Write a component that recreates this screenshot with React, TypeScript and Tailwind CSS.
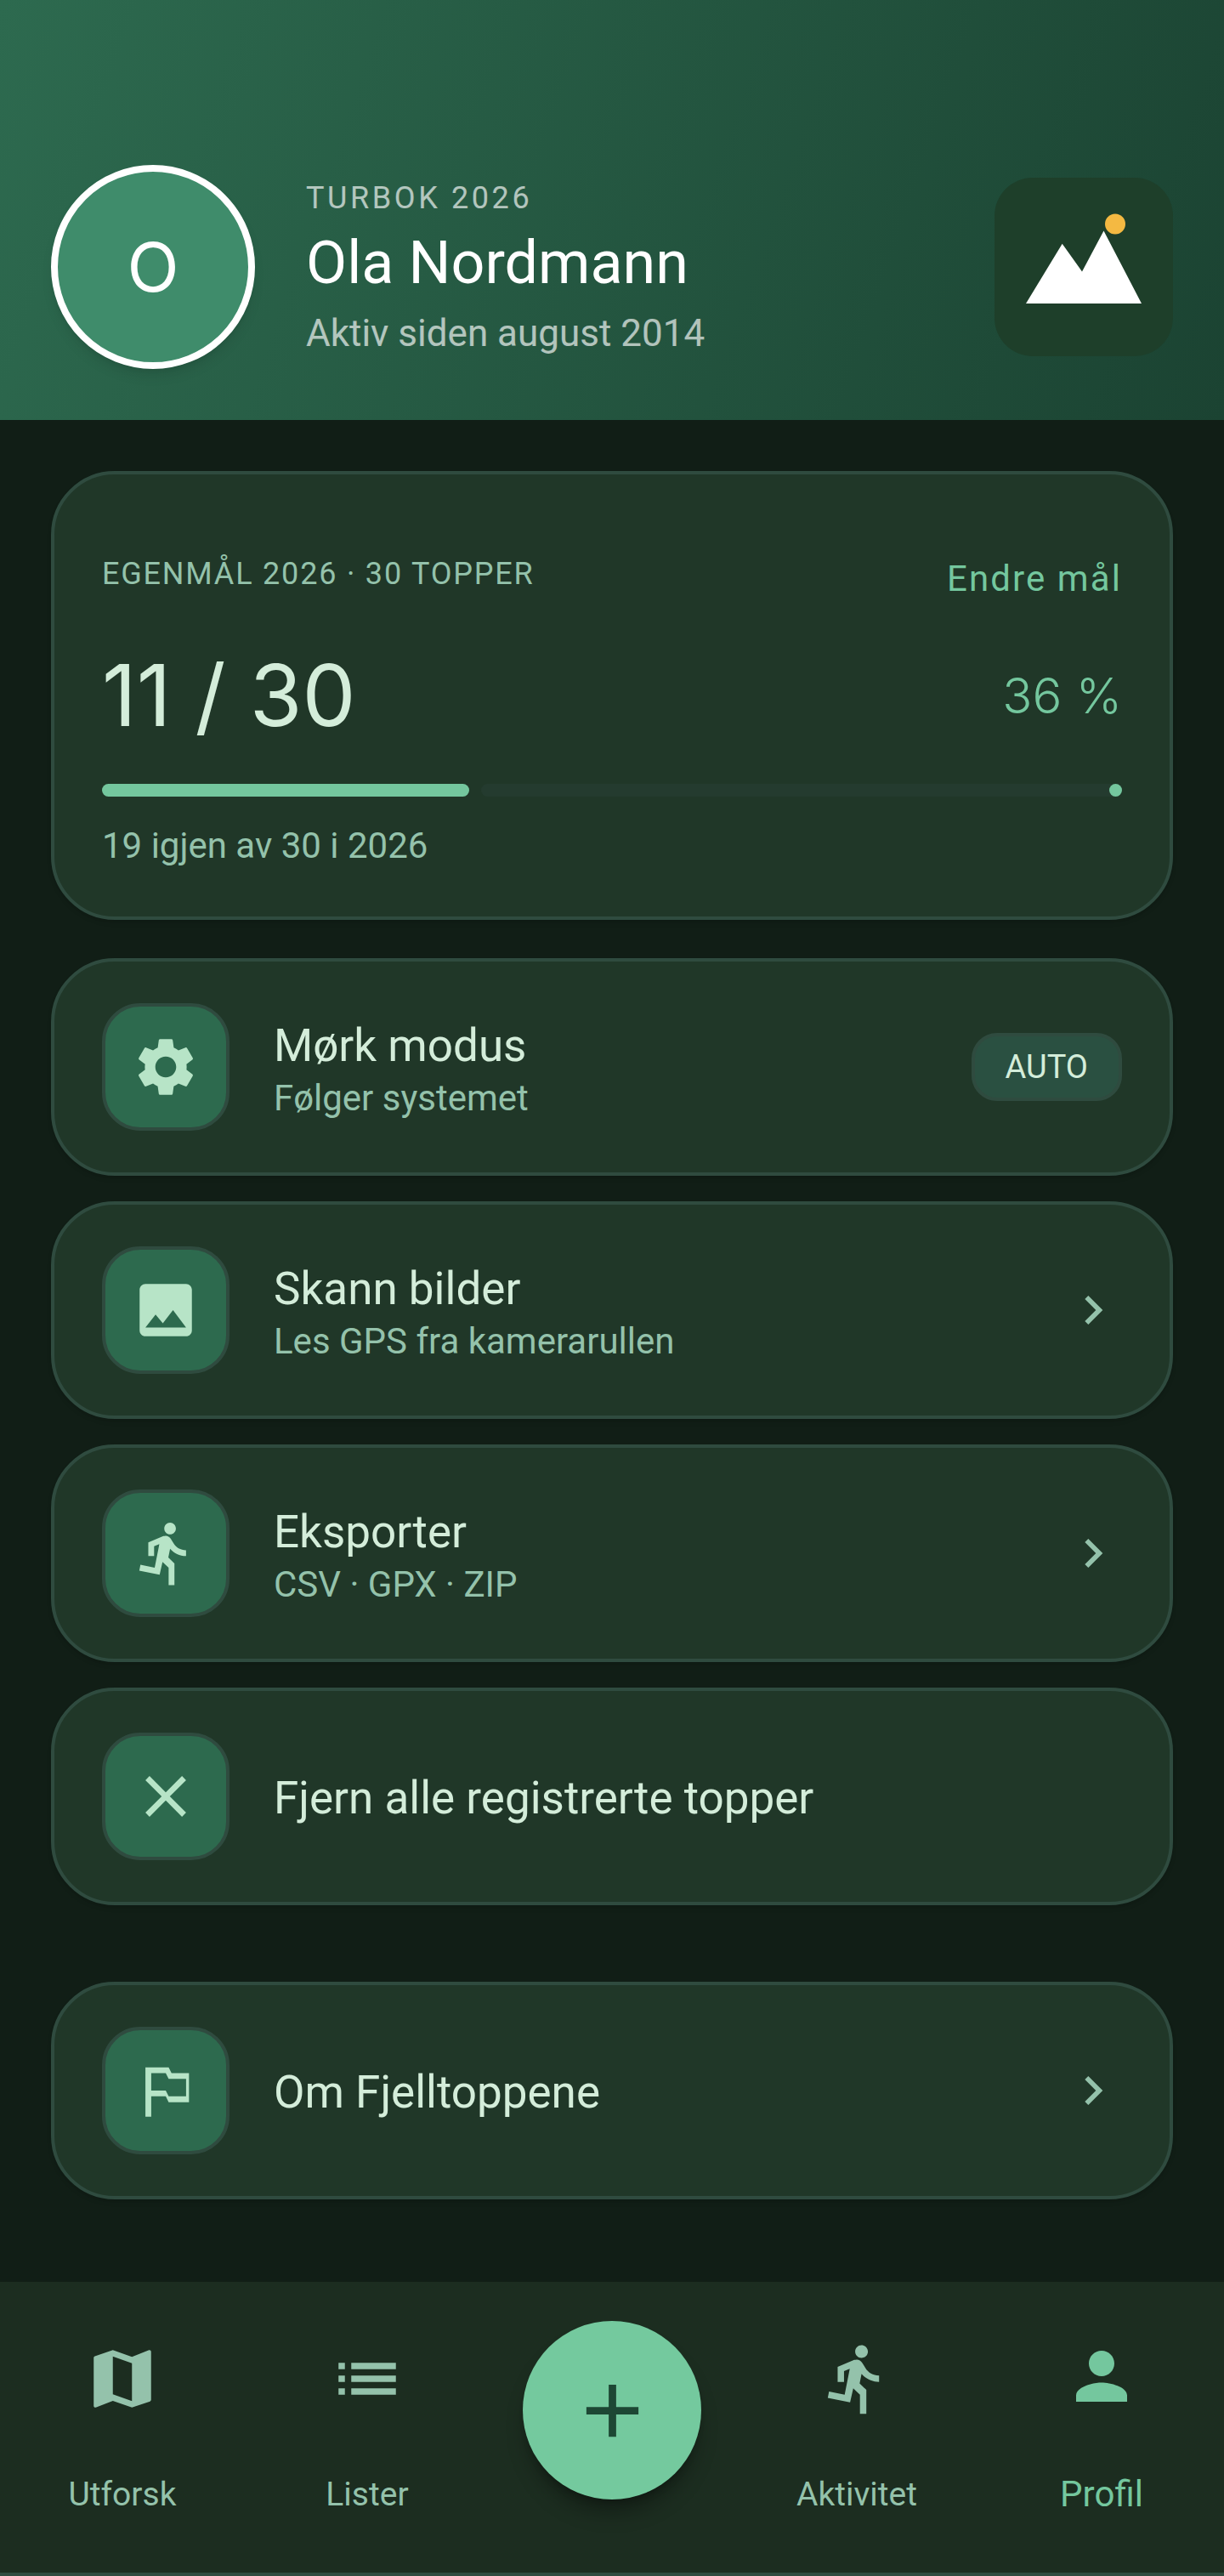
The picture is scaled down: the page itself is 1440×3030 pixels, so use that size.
import type { ReactNode } from "react";
import {
  MdAdd,
  MdChevronRight,
  MdClose,
  MdDirectionsRun,
  MdImage,
  MdList,
  MdMap,
  MdPerson,
  MdSettings,
} from "react-icons/md";
import type { IconType } from "react-icons";
import clsx from "clsx";

const climbed = 11;
const goal = 30;

function MountainLogo() {
  return (
    <svg viewBox="0 0 210 210" className="size-[210px] shrink-0" aria-hidden="true">
      <rect width="210" height="210" rx="45" fill="#1e3f2a" />
      <path d="M37 148 79.7 77.7 103 110.5 128.5 62.5 173 148Z" fill="#fff" />
      <circle cx="142" cy="54.5" r="12" fill="#f4b942" />
    </svg>
  );
}

function FlagIcon() {
  return (
    <svg viewBox="0 0 24 24" width="1em" height="1em" fill="currentColor" fillRule="evenodd">
      <path d="M14 6l-1-2H5v17h2v-7h5l1 2h7V6h-6zM7 6h5l1 2h6v6h-6l-1-2H7V6z" />
    </svg>
  );
}

function Header() {
  return (
    <header className="flex items-center gap-[60px] bg-[linear-gradient(109deg,#2d6a4f,#1b4332)] px-[60px] pt-[194px] pb-[60px]">
      <div className="flex size-[240px] shrink-0 items-center justify-center rounded-full border-8 border-white bg-[#3f8c6b] font-['Inter',sans-serif] text-[80px] text-white shadow-lg">
        O
      </div>
      <div className="flex-1 pt-1">
        <p className="text-[36px] leading-[60px] tracking-widest text-white/65">TURBOK 2026</p>
        <h1 className="text-[70px] leading-[92px] text-white">Ola Nordmann</h1>
        <p className="text-[44px] leading-[74px] text-white/65">Aktiv siden august 2014</p>
      </div>
      <MountainLogo />
    </header>
  );
}

function GoalCard() {
  const percent = Math.floor((climbed / goal) * 100);

  return (
    <section className="rounded-[75px] border-4 border-[#2f4b3f] bg-[#203728] px-14 pt-14 pb-[45px] shadow-md">
      <div className="flex items-start justify-between">
        <h2 className="text-[36px] leading-[122px] tracking-wider text-[#94c2ab]">EGENMÅL 2026 · 30 TOPPER</h2>
        <button className="h-[132px] text-[42px] tracking-wider text-[#74c79e]">Endre mål</button>
      </div>
      <div className="flex items-center justify-between font-['Inter',sans-serif] leading-[144px]">
        <p className="text-[100px]">
          {climbed} / {goal}
        </p>
        <p className="text-[58px] font-light text-[#74c79e]">{percent} %</p>
      </div>
      <div
        role="progressbar"
        aria-label="Egenmål 2026"
        aria-valuenow={climbed}
        aria-valuemax={goal}
        className="mt-8 flex h-[15px] gap-[14px]"
      >
        <div className="rounded-full bg-[#74c79e]" style={{ width: `${percent}%` }} />
        <div className="flex flex-1 justify-end rounded-full bg-[#243b2f]">
          <div className="size-[15px] rounded-full bg-[#74c79e]" />
        </div>
      </div>
      <p className="mt-5 text-[42px] leading-[76px] text-[#94c2ab]">
        {goal - climbed} igjen av {goal} i 2026
      </p>
    </section>
  );
}

interface RowProps {
  icon: ReactNode;
  title: string;
  subtitle?: string;
  trailing?: ReactNode;
}

function Row({ icon, title, subtitle, trailing }: RowProps) {
  return (
    <button className="flex min-h-64 w-full items-center gap-[52px] rounded-[75px] border-4 border-[#2f4b3f] bg-[#203728] px-14 text-left shadow-md">
      <span className="flex size-[150px] shrink-0 items-center justify-center rounded-[45px] border-4 border-[#2f4b3f] bg-[#2d6a4e] text-[82px] text-[#b7e4c7]">
        {icon}
      </span>
      <span className="flex-1 pt-1">
        <span className="block text-[53px] leading-[70px]">{title}</span>
        {subtitle && <span className="block text-[42px] leading-[54px] text-[#94c2ab]">{subtitle}</span>}
      </span>
      {trailing}
    </button>
  );
}

const chevron = <MdChevronRight className="size-[68px] text-[#94c2ab]" />;

interface NavItemProps {
  icon: IconType;
  label: string;
  active?: boolean;
}

function NavItem({ icon: Icon, label, active }: NavItemProps) {
  return (
    <a
      href="#"
      aria-current={active ? "page" : undefined}
      className={clsx(
        "flex flex-1 flex-col items-center gap-[67px]",
        active ? "text-[42px] leading-[54px] text-[#74c79e]" : "text-[39px] leading-[48px] text-[#94c2ab]",
      )}
    >
      <Icon className="size-[90px]" />
      {label}
    </a>
  );
}

export default function App() {
  return (
    <div className="min-h-screen bg-[#111e16] font-['Roboto',sans-serif] text-[#d4edda]">
      <Header />
      <main className="px-[60px] pt-[60px] pb-[97px]">
        <GoalCard />
        <div className="mt-[45px] flex flex-col gap-[30px]">
          <Row
            icon={<MdSettings />}
            title="Mørk modus"
            subtitle="Følger systemet"
            trailing={
              <span className="rounded-[30px] border-4 border-[#2f4b3f] bg-[#2a5041] px-9 text-[38px] leading-[72px]">
                AUTO
              </span>
            }
          />
          <Row icon={<MdImage />} title="Skann bilder" subtitle="Les GPS fra kamerarullen" trailing={chevron} />
          <Row icon={<MdDirectionsRun />} title="Eksporter" subtitle="CSV · GPX · ZIP" trailing={chevron} />
          <Row icon={<MdClose />} title="Fjern alle registrerte topper" />
        </div>
        <div className="mt-[90px]">
          <Row icon={<FlagIcon />} title="Om Fjelltoppene" trailing={chevron} />
        </div>
      </main>
      <nav className="flex h-[346px] items-center border-b-4 border-[#2f4b3f] bg-[#1c2d20]">
        <NavItem icon={MdMap} label="Utforsk" />
        <NavItem icon={MdList} label="Lister" />
        <div className="flex flex-1 justify-center">
          <button
            aria-label="Legg til"
            className="mb-10 flex size-[210px] items-center justify-center rounded-full bg-[#74c99e] text-[#1d4734] shadow-xl shadow-black/30"
          >
            <MdAdd className="size-[105px]" />
          </button>
        </div>
        <NavItem icon={MdDirectionsRun} label="Aktivitet" />
        <NavItem icon={MdPerson} label="Profil" active />
      </nav>
    </div>
  );
}
